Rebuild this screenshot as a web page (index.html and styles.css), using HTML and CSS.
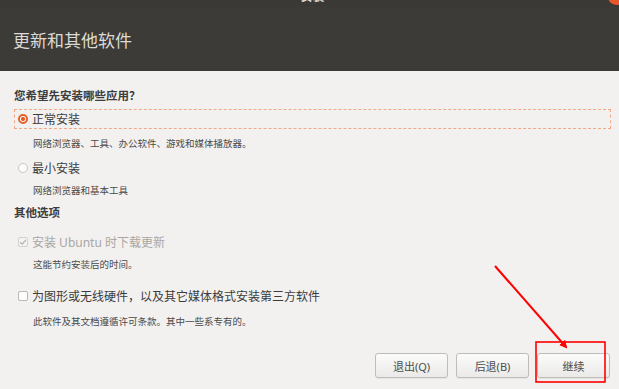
FILE: index.html
```html
<!DOCTYPE html>
<html lang="zh-CN">
<head>
    <meta charset="UTF-8">
    <meta name="viewport" content="width=device-width, initial-scale=1.0">
    <title>安装</title>
    <link rel="stylesheet" href="styles.css">
</head>
<body>
    <div class="window">
        <div class="titlebar">
            <span class="titlebar-text">安装</span>
            <span class="close-btn"></span>
        </div>
        <div class="header">
            <h1 class="header-title">更新和其他软件</h1>
        </div>

        <div class="content">
            <h2 class="section-title">您希望先安装哪些应用？</h2>

            <div class="option focused">
                <span class="radio checked"></span>
                <span class="option-label">正常安装</span>
            </div>
            <p class="option-desc desc-first">网络浏览器、工具、办公软件、游戏和媒体播放器。</p>

            <div class="option option-minimal">
                <span class="radio"></span>
                <span class="option-label">最小安装</span>
            </div>
            <p class="option-desc desc-minimal">网络浏览器和基本工具</p>

            <h2 class="section-title other-title">其他选项</h2>

            <div class="option option-updates">
                <span class="checkbox disabled">
                    <svg width="8" height="8" viewBox="0 0 8 8"><path d="M1.2 4.2 L3.2 6.1 L6.9 1.8" fill="none" stroke="#b5b3af" stroke-width="1.3"/></svg>
                </span>
                <span class="option-label disabled-label">安装 Ubuntu 时下载更新</span>
            </div>
            <p class="option-desc desc-updates">这能节约安装后的时间。</p>

            <div class="option option-thirdparty">
                <span class="checkbox"></span>
                <span class="option-label">为图形或无线硬件，以及其它媒体格式安装第三方软件</span>
            </div>
            <p class="option-desc desc-thirdparty">此软件及其文档遵循许可条款。其中一些系专有的。</p>
        </div>

        <div class="button-row">
            <button class="btn">退出(Q)</button>
            <button class="btn">后退(B)</button>
            <button class="btn">继续</button>
        </div>

        <!-- red annotation drawn over the screenshot -->
        <svg class="annotation" width="619" height="389" viewBox="0 0 619 389">
            <defs>
                <marker id="arrowhead" markerWidth="8" markerHeight="8" refX="6" refY="4" orient="auto" markerUnits="userSpaceOnUse">
                    <path d="M0 0 L8 4 L0 8 Z" fill="#ff0000"/>
                </marker>
            </defs>
            <line x1="495" y1="266" x2="566" y2="347" stroke="#ff0000" stroke-width="2" marker-end="url(#arrowhead)"/>
            <rect x="536" y="342" width="69" height="40" fill="none" stroke="#ff0000" stroke-width="1.6"/>
        </svg>
    </div>
</body>
</html>
```

FILE: styles.css
```css
body {
    margin: 0;
    font-family: "Noto Sans", "Noto Sans CJK SC", sans-serif;
    background: #f2f1f0;
}

.window {
    position: relative;
    width: 619px;
    height: 389px;
    overflow: hidden;
    background: #f2f1f0;
}

/* Title bar (mostly cut off at the top) */
.titlebar {
    position: relative;
    height: 7px;
    background: #3a3935;
    overflow: hidden;
    text-align: center;
}

.titlebar-text {
    display: block;
    margin-top: -11px;
    padding-left: 6px;
    font-size: 12px;
    line-height: 16px;
    font-weight: bold;
    color: #dfdbd2;
}

.close-btn {
    position: absolute;
    right: -6px;
    top: -12px;
    width: 17px;
    height: 17px;
    border-radius: 50%;
    background: #e8572a;
}

/* Page header */
.header {
    height: 64px;
    background: #3c3b37;
    display: flex;
    align-items: center;
    padding: 1px 0 0 13px;
    box-sizing: border-box;
}

.header-title {
    margin: 0;
    font-size: 17px;
    font-weight: normal;
    color: #dcdad5;
}

/* Main content */
.content {
    padding: 0 8px 0 14px;
}

.section-title {
    margin: 17px 0 0 0;
    font-size: 11.5px;
    line-height: 16px;
    font-weight: bold;
    color: #3c3c3c;
}

.other-title {
    margin-top: 7px;
}

.option {
    display: flex;
    align-items: center;
    height: 20px;
    box-sizing: border-box;
    padding-left: 3px;
    border: 1px solid transparent;
}

.option.focused {
    margin-top: 5px;
    border: 1px dashed #f3a882;
}

.option-minimal {
    margin-top: 7px;
}

.option-updates {
    margin-top: 11px;
}

.option-thirdparty {
    margin-top: 14px;
}

.option-label {
    margin-left: 4px;
    font-size: 12px;
    color: #3c3c3c;
}

.disabled-label {
    color: #a9a7a3;
}

.radio {
    width: 10px;
    height: 10px;
    border-radius: 50%;
    box-sizing: border-box;
    border: 1px solid #c9c6c1;
    background: #fdfdfc;
}

.radio.checked {
    border: 2px solid #e2612a;
    background: radial-gradient(circle, #e2612a 0 2px, #fff 2.2px);
}

.checkbox {
    display: flex;
    align-items: center;
    justify-content: center;
    width: 10px;
    height: 10px;
    border-radius: 2px;
    box-sizing: border-box;
    border: 1px solid #bcb9b4;
    background: #fdfdfc;
}

.checkbox.disabled {
    border-color: #d4d2ce;
    background: #f4f3f2;
}

.option-desc {
    margin: 0;
    padding-left: 19px;
    font-size: 9.5px;
    line-height: 14px;
    color: #4a4a4a;
}

.desc-first {
    margin-top: 8px;
}

.desc-minimal {
    margin-top: 6px;
}

.desc-updates {
    margin-top: 6px;
}

.desc-thirdparty {
    margin-top: 9px;
}

/* Bottom buttons */
.button-row {
    display: flex;
    justify-content: flex-end;
    gap: 8px;
    margin-top: 24px;
    padding-right: 9px;
}

.btn {
    width: 73px;
    height: 25px;
    border: 1px solid #c0bdb8;
    border-radius: 3px;
    background: linear-gradient(#fbfbfa, #ebeae8);
    font-family: "Noto Sans", "Noto Sans CJK SC", sans-serif;
    font-size: 11px;
    color: #4c4c4c;
    box-shadow: 0 1px 0 rgba(0,0,0,0.05);
}

.annotation {
    position: absolute;
    left: 0;
    top: 0;
    pointer-events: none;
}
```
